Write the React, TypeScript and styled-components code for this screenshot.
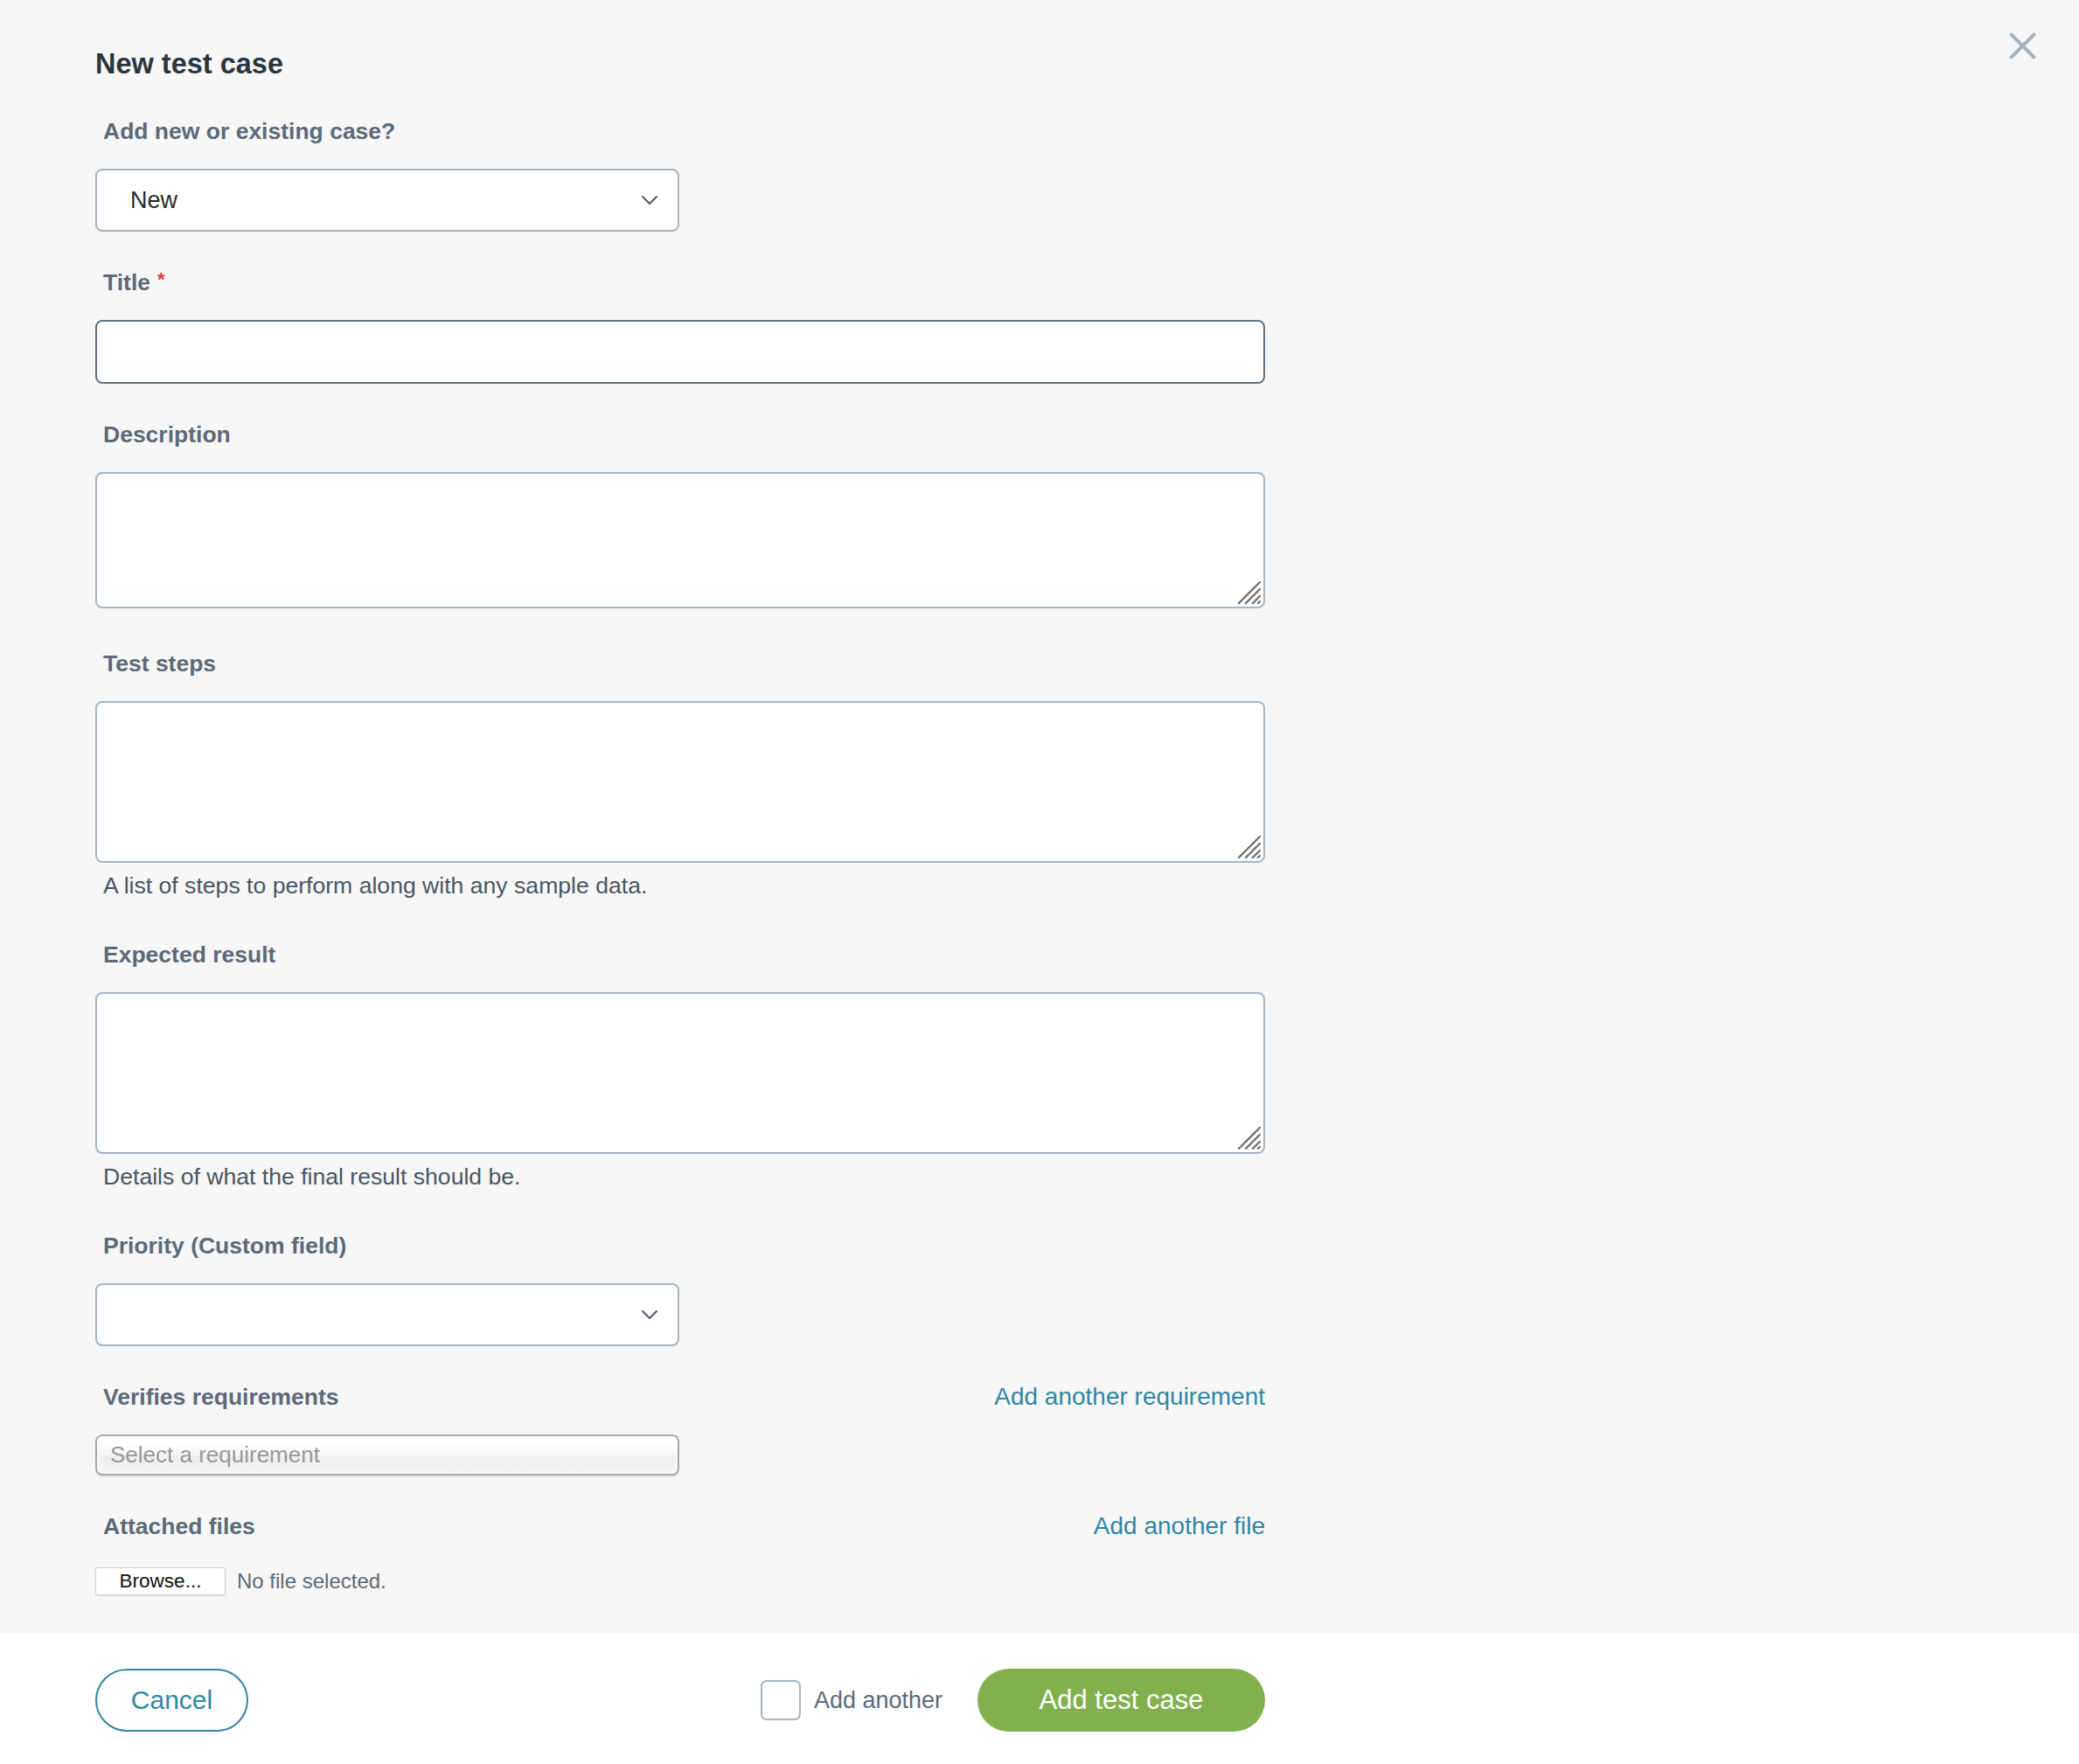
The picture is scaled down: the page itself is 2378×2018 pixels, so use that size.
import * as React from 'react';
import styled, { createGlobalStyle } from 'styled-components';

const colors = {
    pageBg: '#f7f7f7',
    heading: '#2b363c',
    label: '#5d6a79',
    hint: '#4a5662',
    border: '#a6b5c4',
    borderStrong: '#627182',
    link: '#2f87a3',
    required: '#e5384f',
    green: '#80b14c',
    closeIcon: '#a5b4c2',
};

const GlobalStyle = createGlobalStyle`
    html, body {
        margin: 0;
        padding: 0;
        background: ${colors.pageBg};
    }

    body {
        font-family: "Liberation Sans", Arial, sans-serif;
    }

    *, *::before, *::after {
        box-sizing: border-box;
    }
`;

const Chevron = () => (
    <svg width="20" height="12" viewBox="0 0 20 12" fill="none">
        <path d="M2 2l8 8 8-8" stroke="#4d5a66" strokeWidth="2" strokeLinecap="round" strokeLinejoin="round" />
    </svg>
);

const ResizeGrip = () => (
    <Grip viewBox="0 0 26 26">
        <path d="M1 25L25 1M9 25L25 9M17 25L25 17M23 25L25 23" stroke="#6f6f6f" strokeWidth="2.4" strokeLinecap="round" />
    </Grip>
);

interface TextAreaFieldProps {
    label: string;
    height: number;
    hint?: string;
}

const TextAreaField: React.FC<TextAreaFieldProps> = (props) => {
    return (
        <Field>
            <LabelRow>
                <Label>{props.label}</Label>
            </LabelRow>
            <AreaWrap>
                <TextArea $height={props.height} />
                <ResizeGrip />
            </AreaWrap>
            {props.hint && <Hint>{props.hint}</Hint>}
        </Field>
    );
};

export default function App() {
    return (
        <Page>
            <GlobalStyle />
            <CloseButton aria-label="Close">
                <svg width="31" height="31" viewBox="0 0 31 31">
                    <path d="M2.5 2.5l26 26M28.5 2.5l-26 26" stroke={colors.closeIcon} strokeWidth="4" strokeLinecap="round" />
                </svg>
            </CloseButton>

            <Main>
                <Form>
                    <Heading>New test case</Heading>

                    <Field>
                        <LabelRow>
                            <Label>Add new or existing case?</Label>
                        </LabelRow>
                        <SelectBox>
                            <span>New</span>
                            <Chevron />
                        </SelectBox>
                    </Field>

                    <Field>
                        <LabelRow>
                            <Label>
                                Title<Required>*</Required>
                            </Label>
                        </LabelRow>
                        <TextInput type="text" />
                    </Field>

                    <TextAreaField label="Description" height={156} />
                    <TextAreaField
                        label="Test steps"
                        height={185}
                        hint="A list of steps to perform along with any sample data."
                    />
                    <TextAreaField
                        label="Expected result"
                        height={185}
                        hint="Details of what the final result should be."
                    />

                    <Field>
                        <LabelRow>
                            <Label>Priority (Custom field)</Label>
                        </LabelRow>
                        <SelectBox>
                            <span />
                            <Chevron />
                        </SelectBox>
                    </Field>

                    <Field>
                        <LabelRow>
                            <Label>Verifies requirements</Label>
                            <Link href="#">Add another requirement</Link>
                        </LabelRow>
                        <ChosenBox>Select a requirement</ChosenBox>
                    </Field>

                    <Field>
                        <LabelRow $gap={31}>
                            <Label>Attached files</Label>
                            <Link href="#">Add another file</Link>
                        </LabelRow>
                        <FileRow>
                            <BrowseButton type="button">Browse...</BrowseButton>
                            <FileStatus>No file selected.</FileStatus>
                        </FileRow>
                    </Field>
                </Form>
            </Main>

            <Footer>
                <FooterInner>
                    <CancelButton type="button">Cancel</CancelButton>
                    <FooterActions>
                        <CheckLabel>
                            <CheckBox />
                            Add another
                        </CheckLabel>
                        <SubmitButton type="button">Add test case</SubmitButton>
                    </FooterActions>
                </FooterInner>
            </Footer>
        </Page>
    );
}

const Page = styled.div`
    position: relative;
    min-height: 100vh;
    display: flex;
    flex-direction: column;
    background: ${colors.pageBg};
`;

const CloseButton = styled.button`
    position: absolute;
    top: 37px;
    right: 49px;
    width: 31px;
    height: 31px;
    padding: 0;
    border: 0;
    background: none;
    cursor: pointer;

    svg {
        display: block;
    }
`;

const Main = styled.main`
    flex: 1;
    padding: 55px 0 0 109px;
`;

const Form = styled.div`
    width: 1338px;
`;

const Heading = styled.h1`
    margin: 0 0 43px;
    font-size: 32.5px;
    line-height: 36px;
    font-weight: 700;
    color: ${colors.heading};
`;

const Field = styled.div`
    display: flex;
    flex-direction: column;
    margin-bottom: 42px;
`;

const LabelRow = styled.div<{ $gap?: number }>`
    display: flex;
    align-items: center;
    justify-content: space-between;
    height: 32px;
    margin-bottom: ${(p) => p.$gap ?? 27}px;
`;

const Label = styled.label`
    padding-left: 9px;
    font-size: 26.5px;
    line-height: 32px;
    font-weight: 700;
    color: ${colors.label};
`;

const Required = styled.span`
    margin-left: 8px;
    font-size: 22px;
    vertical-align: top;
    position: relative;
    top: -3px;
    color: ${colors.required};
`;

const Link = styled.a`
    font-size: 28px;
    line-height: 32px;
    color: ${colors.link};
    text-decoration: none;
`;

const SelectBox = styled.div`
    width: 668px;
    height: 72px;
    display: flex;
    align-items: center;
    justify-content: space-between;
    padding: 0 22px 0 38px;
    background: #fff;
    border: 2px solid ${colors.border};
    border-radius: 8px;
    font-size: 27px;
    color: #262b2f;

    svg {
        display: block;
    }
`;

const TextInput = styled.input`
    display: block;
    width: 100%;
    height: 73px;
    padding: 0 20px;
    background: #fff;
    border: 2px solid ${colors.borderStrong};
    border-radius: 8px;
    font-family: inherit;
    font-size: 27px;
    outline: none;
`;

const AreaWrap = styled.div`
    position: relative;
    margin-bottom: 5px;
`;

const TextArea = styled.textarea<{ $height: number }>`
    display: block;
    width: 100%;
    height: ${(p) => p.$height}px;
    padding: 14px 20px;
    resize: none;
    background: #fff;
    border: 2px solid ${colors.border};
    border-radius: 8px;
    font-family: inherit;
    font-size: 27px;
    outline: none;
`;

const Grip = styled.svg`
    position: absolute;
    right: 5px;
    bottom: 5px;
    width: 26px;
    height: 26px;
    pointer-events: none;
`;

const Hint = styled.p`
    margin: 5px 0;
    padding-left: 9px;
    font-size: 26.6px;
    line-height: 32px;
    color: ${colors.hint};
`;

const ChosenBox = styled.div`
    width: 668px;
    height: 47px;
    display: flex;
    align-items: center;
    padding: 0 15px;
    border: 2px solid #aaa;
    border-radius: 8px;
    background: linear-gradient(#fff 20%, #f6f6f6 50%, #eee 52%, #f4f4f4 100%);
    box-shadow: 0 0 4px #fff inset, 0 2px 2px rgba(0, 0, 0, 0.1);
    font-size: 26px;
    color: #999;
`;

const FileRow = styled.div`
    display: flex;
    align-items: center;
    gap: 13px;
`;

const BrowseButton = styled.button`
    width: 149px;
    height: 32px;
    padding: 0;
    background: #fff;
    border: 1px solid #d4d4d4;
    border-radius: 3px;
    box-shadow: 0 1px 2px rgba(0, 0, 0, 0.12);
    font-family: inherit;
    font-size: 22.5px;
    color: #111;
`;

const FileStatus = styled.span`
    font-size: 24px;
    color: ${colors.label};
`;

const Footer = styled.footer`
    height: 150px;
    background: #fff;
    padding: 41px 0 0 109px;
`;

const FooterInner = styled.div`
    width: 1338px;
    display: flex;
    align-items: center;
    justify-content: space-between;
`;

const FooterActions = styled.div`
    display: flex;
    align-items: center;
    gap: 40px;
`;

const PillButton = styled.button`
    height: 72px;
    border-radius: 36px;
    font-family: inherit;
    font-size: 30px;
    cursor: pointer;
`;

const CancelButton = styled(PillButton)`
    width: 175px;
    background: #fff;
    border: 2px solid ${colors.link};
    color: ${colors.link};
`;

const SubmitButton = styled(PillButton)`
    width: 329px;
    background: ${colors.green};
    border: 0;
    color: #fff;
    font-size: 31px;
`;

const CheckLabel = styled.label`
    display: flex;
    align-items: center;
    gap: 15px;
    font-size: 27px;
    color: ${colors.label};
`;

const CheckBox = styled.span`
    width: 46px;
    height: 46px;
    background: #fff;
    border: 2px solid ${colors.border};
    border-radius: 7px;
`;
